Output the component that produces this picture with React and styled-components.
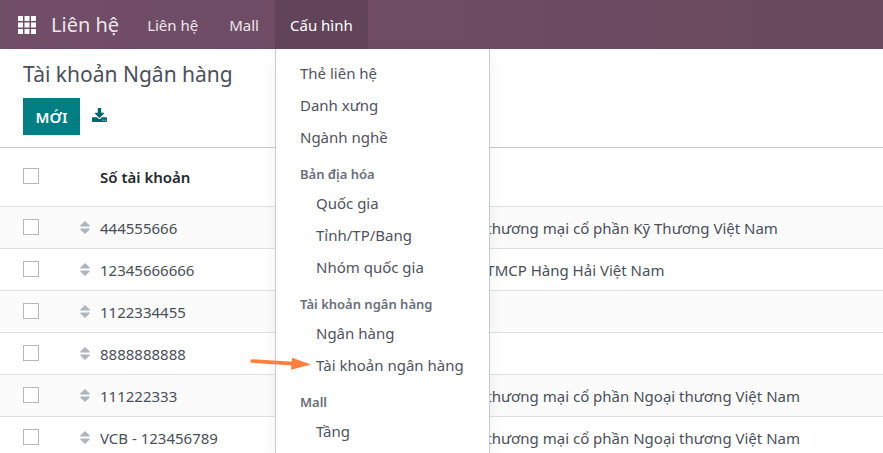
import React, { useState } from 'react';
import styled, { createGlobalStyle } from 'styled-components';

const menuSections = [
  { items: ['Thẻ liên hệ', 'Danh xưng', 'Ngành nghề'] },
  { title: 'Bản địa hóa', items: ['Quốc gia', 'Tỉnh/TP/Bang', 'Nhóm quốc gia'] },
  { title: 'Tài khoản ngân hàng', items: ['Ngân hàng', 'Tài khoản ngân hàng'], marked: 'Tài khoản ngân hàng' },
  { title: 'Mall', items: ['Tầng'] },
];

const accounts = [
  { number: '444555666', bank: 'Ngân hàng thương mại cổ phần Kỹ Thương Việt Nam' },
  { number: '12345666666', bank: 'Ngân hàng TMCP Hàng Hải Việt Nam' },
  { number: '1122334455', bank: '' },
  { number: '8888888888', bank: '' },
  { number: '111222333', bank: 'Ngân hàng thương mại cổ phần Ngoại thương Việt Nam' },
  { number: 'VCB - 123456789', bank: 'Ngân hàng thương mại cổ phần Ngoại thương Việt Nam' },
];

const AppsIcon = () => (
  <svg width="18" height="18" viewBox="0 0 18 18" fill="currentColor" aria-hidden="true">
    {[0, 6.5, 13].map(y => [0, 6.5, 13].map(x => (
      <rect key={`${x}-${y}`} x={x} y={y} width="5" height="5" />
    )))}
  </svg>
);

const DownloadIcon = () => (
  <svg width="15" height="14" viewBox="0 0 1664 1536" fill="currentColor" aria-hidden="true">
    <path d="M1280 1344q0-26-19-45t-45-19-45 19-19 45 19 45 45 19 45-19 19-45zm256 0q0-26-19-45t-45-19-45 19-19 45 19 45 45 19 45-19 19-45zm128-224v320q0 40-28 68t-68 28h-1472q-40 0-68-28t-28-68v-320q0-40 28-68t68-28h465l135 136q58 56 136 56t136-56l136-136h464q40 0 68 28t28 68zm-325-569q17 41-14 70l-448 448q-18 19-45 19t-45-19l-448-448q-31-29-14-70 17-39 59-39h256v-448q0-26 19-45t45-19h256q26 0 45 19t19 45v448h256q42 0 59 39z" />
  </svg>
);

const HandleIcon = () => (
  <svg width="10" height="13" viewBox="0 0 10 13" fill="currentColor" aria-hidden="true">
    <path d="M5 0 9.7 4.4Q10 5.6 9 5.6H1Q0 5.6 0.3 4.4Z" />
    <path d="M5 13 9.7 8.6Q10 7.4 9 7.4H1Q0 7.4 0.3 8.6Z" />
  </svg>
);

const App = () => {
  const [open, setOpen] = useState(true);

  return (
    <Page>
      <GlobalStyle />
      <Navbar>
        <AppsButton aria-label="Ứng dụng"><AppsIcon /></AppsButton>
        <Brand href="#">Liên hệ</Brand>
        <NavItem><NavButton>Liên hệ</NavButton></NavItem>
        <NavItem><NavButton>Mall</NavButton></NavItem>
        <NavItem>
          <NavButton $active={open} aria-expanded={open} onClick={() => setOpen(!open)}>Cấu hình</NavButton>
          {open && (
            <Dropdown>
              {menuSections.map((section, i) => (
                <React.Fragment key={i}>
                  {section.title && <MenuTitle>{section.title}</MenuTitle>}
                  {section.items.map(item => (
                    <MenuItem href="#" key={item} $nested={!!section.title}>
                      {item}
                      {section.marked === item && (
                        <Arrow width="62" height="14" viewBox="0 0 62 14" aria-hidden="true">
                          <path d="M2 4 43 6.6" stroke="#ff7f3f" strokeWidth="3.6" strokeLinecap="round" />
                          <path d="M42 0.8 61 7.6 41 12.8Z" fill="#ff7f3f" />
                        </Arrow>
                      )}
                    </MenuItem>
                  ))}
                </React.Fragment>
              ))}
            </Dropdown>
          )}
        </NavItem>
      </Navbar>

      <ControlPanel>
        <Title>Tài khoản Ngân hàng</Title>
        <Actions>
          <NewButton>MỚI</NewButton>
          <ExportButton aria-label="Xuất"><DownloadIcon /></ExportButton>
        </Actions>
      </ControlPanel>

      <Table>
        <thead>
          <tr>
            <CheckHead><Checkbox aria-label="Chọn tất cả" /></CheckHead>
            <HandleHead />
            <NumberHead>Số tài khoản</NumberHead>
            <Head>Ngân hàng</Head>
          </tr>
        </thead>
        <tbody>
          {accounts.map(account => (
            <Row key={account.number}>
              <CheckCell><Checkbox aria-label={account.number} /></CheckCell>
              <HandleCell><HandleIcon /></HandleCell>
              <Cell>{account.number}</Cell>
              <Cell>{account.bank}</Cell>
            </Row>
          ))}
        </tbody>
      </Table>
    </Page>
  );
};

export default App;

const GlobalStyle = createGlobalStyle`
  * {
    box-sizing: border-box;
  }
  body {
    margin: 0;
    background: #fff;
    color: #4a4f59;
    font-family: 'Noto Sans', 'Open Sans', sans-serif;
    font-size: 15px;
  }
  button {
    font: inherit;
    border: none;
    padding: 0;
    cursor: pointer;
  }
  a {
    color: inherit;
    text-decoration: none;
  }
`;

const Page = styled.div`
  height: 100vh;
  overflow: hidden;
`;

const Navbar = styled.nav`
  display: flex;
  gap: 1px;
  height: 49px;
  border-left: 3px solid #6b5163;
  background: linear-gradient(to right, #714d67, #6a4a5f);
  color: #ece6eb;
`;

const AppsButton = styled.button`
  display: flex;
  align-items: center;
  padding: 0 14px 0 15px;
  background: none;
  color: #fff;
`;

const Brand = styled.a`
  display: flex;
  align-items: center;
  padding-right: 12px;
  font-size: 20px;
`;

const NavItem = styled.div`
  position: relative;
  display: flex;
`;

const NavButton = styled.button`
  padding: 0 15px;
  background: ${props => (props.$active ? '#62445a' : 'none')};
  color: ${props => (props.$active ? '#fff' : 'inherit')};
`;

const Dropdown = styled.div`
  position: absolute;
  top: 100%;
  left: 0;
  z-index: 10;
  width: 215px;
  padding: 8px 0;
  border: 1px solid #c9ccd2;
  border-top: none;
  background: #fff;
  box-shadow: 0 8px 16px rgba(0, 0, 0, 0.06);
  color: #4f535e;
`;

const MenuItem = styled.a`
  position: relative;
  display: block;
  padding-left: ${props => (props.$nested ? '40px' : '24px')};
  line-height: 32px;
  white-space: nowrap;
`;

const MenuTitle = styled.div`
  padding: 9px 0 0 24px;
  color: #686e7a;
  font-size: 13px;
  font-weight: 600;
  line-height: 25px;
`;

// points at the menu entry from outside the dropdown
const Arrow = styled.svg`
  position: absolute;
  top: 8px;
  left: -26px;
  fill: none;
`;

const ControlPanel = styled.header`
  padding: 8px 23px 12px;
  border-bottom: 1px solid #c9c9cc;
`;

const Title = styled.h1`
  margin: 0;
  font-size: 21px;
  font-weight: 400;
  line-height: 34px;
`;

const Actions = styled.div`
  display: flex;
  align-items: center;
  gap: 12px;
  margin-top: 7px;
`;

const NewButton = styled.button`
  min-width: 57px;
  height: 37px;
  padding: 0 12px;
  background: #017e84;
  color: #fff;
  font-weight: 600;
`;

const ExportButton = styled.button`
  display: flex;
  padding-bottom: 4px;
  background: none;
  color: #01666b;
`;

const Table = styled.table`
  width: 100%;
  border-spacing: 0;
  table-layout: fixed;
`;

const Head = styled.th`
  height: 59px;
  padding: 0;
  border-bottom: 1px solid #dee0e4;
  color: #24282d;
  font-weight: 600;
  text-align: left;
`;

const CheckHead = styled(Head)`
  width: 72px;
  padding-left: 23px;
`;

const HandleHead = styled(Head)`
  width: 28px;
`;

const NumberHead = styled(Head)`
  width: 304px;
`;

const Row = styled.tr`
  background: #fff;
  &:nth-child(odd) {
    background: #fbfbfb;
  }
`;

const Cell = styled.td`
  height: 42px;
  padding: 0;
  border-bottom: 1px solid #dee0e4;
  white-space: nowrap;
`;

const CheckCell = styled(Cell)`
  padding-left: 23px;
`;

const HandleCell = styled(Cell)`
  padding-left: 8px;
  color: #adb5bd;
  svg {
    display: block;
  }
`;

const Checkbox = styled.input.attrs({ type: 'checkbox' })`
  appearance: none;
  display: block;
  width: 16px;
  height: 16px;
  margin: 0 0 2px;
  border: 1px solid #b8b8b8;
  background: #fff;
  &:checked {
    background: #017e84;
  }
`;
